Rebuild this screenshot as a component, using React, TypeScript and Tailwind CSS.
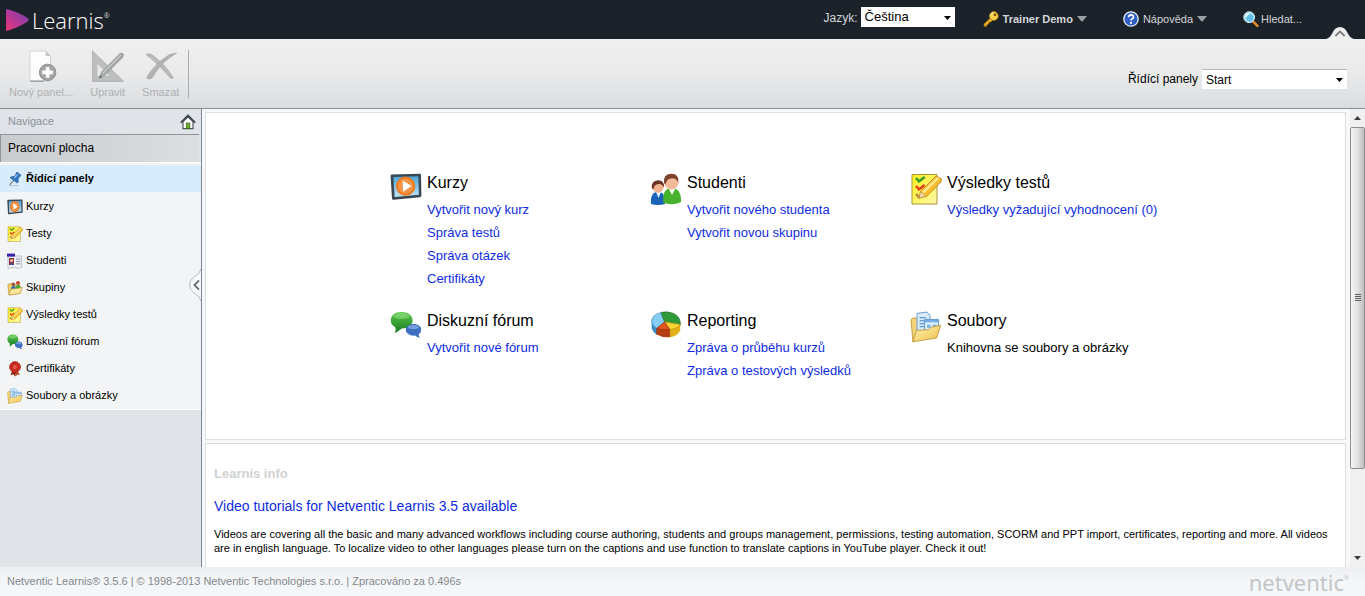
import type { ReactNode } from "react";

type IconProps = { className?: string };

const CourseIcon = ({ className }: IconProps) => (
  <svg className={className} viewBox="0 0 32 28" preserveAspectRatio="none" aria-hidden="true">
    <defs>
      <linearGradient id="courseScreen" x1="0" y1="0" x2="0" y2="1">
        <stop offset="0" stopColor="#4aa3d6" />
        <stop offset="1" stopColor="#bfe6f7" />
      </linearGradient>
    </defs>
    <path d="M1.5 1.5 L30 0.8 Q31 .8 31 2 L31.4 22.6 Q31.4 24 30 24.2 L3.6 26.8 Q2.2 27 2 25.4 L.6 3 Q.6 1.6 1.5 1.5Z" fill="#3b4653" />
    <path d="M3.4 4 L28.4 3.2 L28.9 21.8 L4.6 24Z" fill="url(#courseScreen)" />
    <circle cx="15.6" cy="13.2" r="9.6" fill="#f07a1c" />
    <circle cx="15.6" cy="13.2" r="7.6" fill="#f79447" />
    <path d="M12.6 7.6 L21.6 13 L13 18.8Z" fill="#fff" />
  </svg>
);

const StudentsIcon = ({ className }: IconProps) => (
  <svg className={className} viewBox="0 0 32 32" aria-hidden="true">
    <path d="M1 31 Q0 21 6 19 H10 Q16 21 15 31 Q8 33 1 31Z" fill="#1c62b8" />
    <path d="M6 19 L8.5 25 L11 19Z" fill="#e8f3fb" />
    <circle cx="8" cy="14" r="5.6" fill="#f0b391" />
    <path d="M1.8 15 Q1 7.6 8 7.2 Q15 7.6 13.8 14.6 Q12.6 11.4 9.4 11 Q4 11 3.4 16.4Z" fill="#6d3424" />
    <path d="M13.4 29.6 Q12 18 18.4 15.4 H25 Q31.6 17.6 31 29 Q22 33.4 13.4 29.6Z" fill="#47b32c" />
    <path d="M18.6 15.4 L22 22 L25.6 15.4Z" fill="#f2f9e8" />
    <circle cx="21.4" cy="9.4" r="7" fill="#f4b997" />
    <path d="M14 10 Q13 1.2 21 .8 Q29.6 .6 28.4 10.6 Q27.6 6.2 24 5.4 Q17 4 15.4 11.6Z" fill="#7d402c" />
  </svg>
);

const TestIcon = ({ className }: IconProps) => (
  <svg className={className} viewBox="0 0 32 32" aria-hidden="true">
    <defs>
      <linearGradient id="testPaper" x1="0" y1="0" x2="1" y2="1">
        <stop offset="0" stopColor="#ffee1c" />
        <stop offset="1" stopColor="#fff9a8" />
      </linearGradient>
    </defs>
    <path d="M2 1.5 H27 V31 H2Z" fill="url(#testPaper)" stroke="#a8943c" />
    <path d="M6 5 L9 8.4 L14.6 4" fill="none" stroke="#2f9a26" strokeWidth="2.4" />
    <path d="M6 13 L9 16.4 L14.6 12" fill="none" stroke="#e23a1a" strokeWidth="2.4" />
    <path d="M6 21 L9 24.4 L13 21" fill="none" stroke="#b9863a" strokeWidth="2.4" />
    <path d="M9 25 L10.6 18.4 L26 3 L31.4 5.6 L31 9 L16.4 23.4Z" fill="#f8bf2e" stroke="#b87f1b" strokeWidth=".8" />
    <path d="M12.8 19.6 L28.4 4.8" stroke="#ffe994" strokeWidth="2.2" />
    <path d="M9 25 L10.6 18.6 L15.8 23.2Z" fill="#f3dcb4" stroke="#b87f1b" strokeWidth=".5" />
  </svg>
);

const ForumIcon = ({ className }: IconProps) => (
  <svg className={className} viewBox="0 0 32 28" preserveAspectRatio="none" aria-hidden="true">
    <defs>
      <linearGradient id="bubbleGreen" x1="0" y1="0" x2="0" y2="1">
        <stop offset="0" stopColor="#5cc850" />
        <stop offset="1" stopColor="#157a1c" />
      </linearGradient>
    </defs>
    <path d="M11.4 1 C18 1 22.6 4.4 22.6 9.6 C22.6 14.6 18 17.6 12 17.6 C10 18.6 7 21.6 4.6 22 C6 20 6 17.6 5 15.8 C2 14.4 .8 12.2 .8 9.4 C.8 4.4 5 1 11.4 1Z" fill="url(#bubbleGreen)" />
    <ellipse cx="11.6" cy="5" rx="8" ry="3" fill="#9be48c" opacity=".5" />
    <path d="M23.6 13 C28.4 13 31.2 15.6 31.2 18.8 C31.2 21 30 22.6 28.6 23.4 C28.6 24.8 29.4 26 30.2 26.8 C28 26.8 26.2 25.6 25.2 24.6 C19.4 25 15.8 22.2 15.8 18.8 C15.8 15.6 19 13 23.6 13Z" fill="#3f6fc0" />
    <ellipse cx="23.4" cy="16" rx="5.6" ry="2" fill="#8db0e8" opacity=".7" />
  </svg>
);

const PieIcon = ({ className }: IconProps) => (
  <svg className={className} viewBox="0 0 32 28" aria-hidden="true">
    <path d="M1.6 9 V17 Q3 21.6 7 23.6 V14Z" fill="#3c8fc6" />
    <path d="M6.8 14 V23.6 Q12 26.8 19.6 26.2 V15Z" fill="#b53e12" />
    <path d="M19.6 14 V26.2 Q27.6 25 30.2 19.4 V11Z" fill="#e3b018" />
    <path d="M14.6 10.8 L10.6 1.6 Q2 4 1.6 10 Q2 14.6 6.8 17.4Z" fill="#86cdf3" stroke="#3a86b8" strokeWidth=".6" />
    <path d="M14.6 10.8 L11 1.4 Q17 -.2 23.6 2.4 Q30.8 6 30.4 14Z" fill="#2f9a38" stroke="#1c6c25" strokeWidth=".6" />
    <path d="M14.6 10.8 L30.4 13.6 Q28.6 17.4 19.6 18.4Z" fill="#fbd43a" stroke="#b9870c" strokeWidth=".6" />
    <path d="M14.6 10.8 L6.8 17.4 Q12.6 19.4 19.6 18.4Z" fill="#e3551d" stroke="#8f2d0b" strokeWidth=".6" />
    <path d="M6.8 17.4 V23.6 M19.6 18.4 V26" stroke="#8f2d0b" strokeWidth=".8" />
  </svg>
);

const FilesIcon = ({ className }: IconProps) => (
  <svg className={className} viewBox="0 0 32 32" aria-hidden="true">
    <defs>
      <linearGradient id="folderFront" x1="0" y1="0" x2="1" y2="1">
        <stop offset="0" stopColor="#fff2b2" />
        <stop offset="1" stopColor="#efc04a" />
      </linearGradient>
    </defs>
    <path d="M1 9 L2.6 7 H8 L9 9 V28 L3 31Z" fill="#f2d376" stroke="#bb8f2f" strokeWidth=".8" />
    <path d="M7 2.4 L17 1 L20 4.4 L20.4 20 H7Z" fill="#d8ebfb" stroke="#6f9fd0" />
    <path d="M9.6 6.6 H16 M9.6 9.6 H17 M9.6 12.6 H15 M9.6 15.6 H15" stroke="#5f9cd8" strokeWidth="1.4" />
    <path d="M14.6 8.4 H28.6 V21 H14.6Z" fill="#e4f2fd" stroke="#6796c8" />
    <path d="M15 9 H28.2 V11.4 H15Z" fill="#75aee4" />
    <path d="M17 13.4 H20.6 V17 H17Z M22.6 13.4 H26.6 V17 H22.6Z" fill="#82b4e2" />
    <path d="M2.8 30.8 L6.4 19.4 L19 18.6 L21.6 16 L30.6 14.4 L26.6 27Z" fill="url(#folderFront)" stroke="#bb8f2f" strokeWidth=".8" />
  </svg>
);

const PinIcon = ({ className }: IconProps) => (
  <svg className={className} viewBox="0 0 16 16" aria-hidden="true">
    <path d="M2 14.6 H11" stroke="#b8c3cf" strokeWidth="1.2" />
    <path d="M2.6 13.8 L6.8 9.4" stroke="#7b8896" strokeWidth="1.3" />
    <path d="M3 6.6 Q5 5 7 5.6 L9 3.4 Q8.4 2 10 1.2 L13.8 4 Q13.8 5.6 12.2 5.8 L11 8.4 Q12 10.6 10.2 12Z" fill="#2f78c4" stroke="#1c4f8c" strokeWidth=".6" />
    <path d="M7.4 6.8 L10.6 3.4" stroke="#9cc8f2" strokeWidth="1.2" />
  </svg>
);

const CardIcon = ({ className }: IconProps) => (
  <svg className={className} viewBox="0 0 16 16" aria-hidden="true">
    <path d="M1 3 H14.6 V14.4 L11 15.4 L7 14.4 L1 15.4Z" fill="#eef1f6" stroke="#a9afba" strokeWidth=".7" />
    <path d="M0 .6 H8 V3.6 H0Z" fill="#3a1fb0" />
    <path d="M2 5 H7 V12 H2Z" fill="#8a3345" />
    <circle cx="4.6" cy="7.4" r="1.5" fill="#f3c4a4" />
    <path d="M2.6 12 Q4.6 8 6.6 12Z" fill="#3457b8" />
    <path d="M9 6 H13.4 M9 8.4 H13.4 M9 10.8 H13.4" stroke="#8e97a8" />
  </svg>
);

const GroupFolderIcon = ({ className }: IconProps) => (
  <svg className={className} viewBox="0 0 16 16" aria-hidden="true">
    <path d="M.8 5 L2 3.8 H5 L6 5 H13 V13 L2 15Z" fill="#f0d06a" stroke="#b38a2e" strokeWidth=".6" />
    <circle cx="6.4" cy="4.4" r="1.8" fill="#9c5a3a" />
    <path d="M4 9 Q4 6 6.4 6 T9 9Z" fill="#2d6fc0" />
    <circle cx="11" cy="3" r="2" fill="#c2452e" />
    <path d="M8.4 8.6 Q8.4 5 11 5 T13.8 8.6Z" fill="#3faa35" />
    <path d="M1.8 15 L4 9 L9.4 8.6 L15.4 7.4 L13.4 13.4Z" fill="#fbe89a" stroke="#b38a2e" strokeWidth=".6" />
  </svg>
);

const CertificateIcon = ({ className }: IconProps) => (
  <svg className={className} viewBox="0 0 16 16" aria-hidden="true">
    <path d="M5.4 9 L3.6 14 L6.6 13.4 L8 15.6 L9.4 9Z" fill="#8f2a14" />
    <path d="M10 9 L13 14 L10.4 13.4 L8.6 15.4 L7.4 9Z" fill="#b34a1e" />
    <circle cx="8" cy="6" r="5.4" fill="#cf2a1e" stroke="#94160f" strokeWidth="1" strokeDasharray="1.6 .8" />
    <circle cx="8" cy="6" r="2.8" fill="#ea5445" stroke="#a31c14" strokeWidth=".7" />
  </svg>
);

const HomeIcon = () => (
  <svg className="h-4 w-4" viewBox="0 0 16 16" aria-hidden="true">
    <path d="M3 7.6 L8 2.8 L13 7.6 V14.6 H3Z" fill="#fff" stroke="#4c5560" strokeWidth="1.2" />
    <path d="M.8 8.6 L8 1.6 L15.2 8.6" fill="none" stroke="#3c4652" strokeWidth="1.8" />
    <path d="M6.4 9 H9.8 V14.6 H6.4Z" fill="#6cab2c" stroke="#3f6b17" strokeWidth=".8" />
  </svg>
);

const KeyIcon = () => (
  <svg className="h-4 w-4" viewBox="0 0 16 16" aria-hidden="true">
    <path d="M8.6 6 L1 13 L1.2 15.2 L3.6 15.2 L4 13.4 L5.6 13 L6 11.2 L7.8 11 L10.4 8.4Z" fill="#f0b429" stroke="#a86f0c" strokeWidth=".7" />
    <circle cx="10.8" cy="5" r="4.4" fill="#f8cf4c" stroke="#b27a12" strokeWidth=".7" />
    <circle cx="12" cy="3.8" r="1.3" fill="#6d4a08" />
    <path d="M7.6 4.4 Q8.4 2 10.6 1.8" fill="none" stroke="#fff2b8" />
  </svg>
);

const HelpIcon = () => (
  <svg className="h-4 w-4" viewBox="0 0 16 16" aria-hidden="true">
    <circle cx="8" cy="8" r="7.2" fill="#2f5fc4" stroke="#e9effa" strokeWidth="1.3" />
    <path d="M5.6 6.2 Q5.8 3.8 8.1 3.8 Q10.5 3.9 10.4 6 Q10.3 7.2 9 7.9 Q8 8.5 8 9.6" fill="none" stroke="#fff" strokeWidth="1.7" />
    <circle cx="8" cy="11.9" r="1.1" fill="#fff" />
  </svg>
);

const SearchIcon = () => (
  <svg className="h-4 w-4" viewBox="0 0 16 16" aria-hidden="true">
    <path d="M10 10.4 L14.4 14.8" stroke="#e08a2c" strokeWidth="2.6" strokeLinecap="round" />
    <circle cx="6.2" cy="6.2" r="5.4" fill="#a5e3f7" stroke="#d8edf5" strokeWidth="1" />
    <circle cx="6.8" cy="6.8" r="3.6" fill="#5fc0ea" />
    <path d="M3 6 Q3.2 3.4 5.8 3" fill="none" stroke="#fff" strokeWidth="1.4" />
  </svg>
);

const NewPanelIcon = () => (
  <svg className="h-8 w-8" viewBox="0 0 32 32" aria-hidden="true">
    <path d="M5 1 H20.6 L25.6 6 V31 H5Z" fill="#fdfdfd" stroke="#d2d4d6" />
    <path d="M20.6 1 V6 H25.6Z" fill="#c4c6c8" />
    <path d="M5 31.2 H19" stroke="#9b9d9f" strokeWidth="1.4" />
    <circle cx="22.6" cy="22.4" r="8.2" fill="#a2a4a6" stroke="#8c8e90" />
    <path d="M22.6 17 V27.8 M17.2 22.4 H28" stroke="#fff" strokeWidth="3.6" />
  </svg>
);

const EditIcon = () => (
  <svg className="h-8 w-8" viewBox="0 0 32 32" aria-hidden="true">
    <path fillRule="evenodd" d="M0 .6 L31.6 31.4 H0Z M5.4 14 V25.4 H17Z" fill="#bcbebf" />
    <path d="M0 .6 L31.6 31.4 H0Z" fill="none" stroke="#a6a8aa" strokeWidth=".8" />
    <path d="M7 28.4 L9 22 L28 3 Q31 2 32 5 L31 7.4 L13 25.6Z" fill="#a2a4a5" />
    <path d="M10.6 23.6 L29 5" stroke="#c9cbcc" strokeWidth="1.4" />
    <path d="M7 28.6 L8.2 25 L10.4 27.2Z" fill="#6c6e70" />
  </svg>
);

const DeleteIcon = () => (
  <svg className="h-8 w-8" viewBox="0 0 32 32" aria-hidden="true">
    <path d="M1 4.4 Q4 3 6.6 4.6 Q19 13 28.6 28 L25.6 28.4 Q14 14 1 4.4Z" fill="#b7b9bb" stroke="#a3a5a7" strokeWidth=".6" />
    <path d="M31.6 3 Q30 3 24 4.8 Q9 14.6 2 27 Q1.6 29.4 4.4 29 Q7 28.8 9 25 Q16 12.6 31.6 3Z" fill="#b0b2b4" stroke="#a3a5a7" strokeWidth=".6" />
  </svg>
);

const DownArrow = ({ className }: IconProps) => (
  <svg className={className} viewBox="0 0 10 6" preserveAspectRatio="none" aria-hidden="true">
    <path d="M0 0 H10 L5 6Z" fill="currentColor" />
  </svg>
);

const navItems = [
  { label: "Kurzy", icon: CourseIcon },
  { label: "Testy", icon: TestIcon },
  { label: "Studenti", icon: CardIcon },
  { label: "Skupiny", icon: GroupFolderIcon },
  { label: "Výsledky testů", icon: TestIcon },
  { label: "Diskuzní fórum", icon: ForumIcon },
  { label: "Certifikáty", icon: CertificateIcon },
  { label: "Soubory a obrázky", icon: FilesIcon },
];

const sections = [
  {
    title: "Kurzy",
    icon: CourseIcon,
    iconClass: "h-7",
    links: ["Vytvořit nový kurz", "Správa testů", "Správa otázek", "Certifikáty"],
  },
  {
    title: "Studenti",
    icon: StudentsIcon,
    iconClass: "h-8",
    links: ["Vytvořit nového studenta", "Vytvořit novou skupinu"],
  },
  {
    title: "Výsledky testů",
    icon: TestIcon,
    iconClass: "h-8",
    links: ["Výsledky vyžadující vyhodnocení (0)"],
  },
  {
    title: "Diskuzní fórum",
    icon: ForumIcon,
    iconClass: "h-7",
    links: ["Vytvořit nové fórum"],
  },
  {
    title: "Reporting",
    icon: PieIcon,
    iconClass: "h-7",
    links: ["Zpráva o průběhu kurzů", "Zpráva o testových výsledků"],
  },
  {
    title: "Soubory",
    icon: FilesIcon,
    iconClass: "h-8",
    links: [],
    note: "Knihovna se soubory a obrázky",
  },
];

const ToolButton = ({ label, children }: { label: string; children: ReactNode }) => (
  <button
    type="button"
    disabled
    className="flex flex-col items-center gap-[2px] text-[11px] leading-4 text-[#aeb1b4]"
  >
    {children}
    <span>{label}</span>
  </button>
);

const Header = () => (
  <header className="relative flex h-[39px] shrink-0 items-center bg-[#1c2229] text-[#d3d6d9]">
    <a href="#" className="flex items-center gap-[3px] pl-[6px] text-white">
      <svg className="h-[22px] w-[23px]" viewBox="0 0 23 22" aria-hidden="true">
        <defs>
          <linearGradient id="logoMark" x1="0" y1="1" x2="1" y2="0">
            <stop offset="0" stopColor="#e8356f" />
            <stop offset=".5" stopColor="#b03a9c" />
            <stop offset="1" stopColor="#6f3fa8" />
          </linearGradient>
        </defs>
        <path d="M0 1 Q0 0 1.4 .2 Q14 3.4 21.6 9.2 Q23.6 11 21.6 12.6 Q14 18 1.4 21.8 Q0 22 0 21Z" fill="url(#logoMark)" />
      </svg>
      <span className="flex font-['Open_Sans',sans-serif] text-[22px] font-light leading-6">
        Learnis<span className="text-[7px] leading-4">®</span>
      </span>
    </a>
    <div className="ml-auto flex h-full items-start pt-[7px]">
      <label htmlFor="language" className="pr-[3px] text-[12px] leading-[22px]">
        Jazyk:
      </label>
      <div className="relative h-5 w-[94px]">
        <select
          id="language"
          className="block h-full w-full appearance-none bg-white pl-1 text-[13px] leading-5 text-black"
        >
          <option>Čeština</option>
        </select>
        <DownArrow className="pointer-events-none absolute right-1 top-[9px] h-[4px] w-[7px] text-black" />
      </div>
      <button type="button" className="ml-7 flex h-6 items-center gap-1 text-[11px] font-bold">
        <KeyIcon />
        Trainer Demo
        <DownArrow className="h-[6px] w-[10px] text-[#9da1a5]" />
      </button>
      <button type="button" className="ml-9 flex h-6 items-center gap-1 text-[11px]">
        <HelpIcon />
        Nápověda
        <DownArrow className="h-[6px] w-[10px] text-[#9da1a5]" />
      </button>
      <button type="button" className="ml-9 mr-[63px] flex h-6 items-center gap-[2px] text-[11px]">
        <SearchIcon />
        Hledat...
      </button>
    </div>
    <button type="button" aria-label="Skrýt panel" className="absolute bottom-0 right-[11px]">
      <svg className="h-3 w-7" viewBox="0 0 28 12" aria-hidden="true">
        <path d="M0 12 Q4 11 6.4 6 Q9 0 14 0 T21.6 6 Q24 11 28 12Z" fill="#efefef" />
        <path d="M9.4 9 L14 4.4 L18.6 9" fill="none" stroke="#777b80" strokeWidth="1.8" />
      </svg>
    </button>
  </header>
);

const Toolbar = () => (
  <div className="flex h-[70px] shrink-0 items-start justify-between border-b border-[#858e96] bg-linear-to-b from-[#efefef] via-[#eaeaeb] to-[#d9dde0]">
    <div className="flex items-start gap-[17px] pl-[9px] pt-[11px]">
      <ToolButton label="Nový panel...">
        <NewPanelIcon />
      </ToolButton>
      <ToolButton label="Upravit">
        <EditIcon />
      </ToolButton>
      <ToolButton label="Smazat">
        <DeleteIcon />
      </ToolButton>
      <div className="-ml-2 h-12 w-px bg-[#a9adb1]" />
    </div>
    <div className="flex items-center pr-[18px] pt-[30px]">
      <label htmlFor="dashboard" className="pr-1 text-[12px] leading-5 text-black">
        Řídící panely
      </label>
      <div className="relative h-5 w-[145px]">
        <select
          id="dashboard"
          className="block h-full w-full appearance-none border-t border-[#b4b8bc] bg-white pl-1 text-[12px] leading-[18px] text-black"
        >
          <option>Start</option>
        </select>
        <DownArrow className="pointer-events-none absolute right-1 top-[9px] h-[4px] w-[7px] text-black" />
      </div>
    </div>
  </div>
);

const Sidebar = () => (
  <aside className="relative w-[202px] shrink-0 border-r border-[#7c8690] bg-[#e0e3e8]">
    <div className="flex h-[25px] items-center justify-between pl-2 pr-[5px] text-[11px] text-[#8b9299]">
      Navigace
      <a href="#" aria-label="Domů">
        <HomeIcon />
      </a>
    </div>
    <h2 className="mr-[2px] h-[28px] border-l border-t border-[#8e9499] bg-linear-to-r from-[#c9cccf] to-[#dcdee0] pl-[7px] text-[12px] leading-[27px] text-black">
      Pracovní plocha
    </h2>
    <nav className="border-y border-white bg-[#f2f4f5] text-[11px] text-black">
      <a href="#" className="mb-px mt-[2px] flex h-[27px] items-center gap-[3px] bg-[#d9ecfb] pl-[7px] font-bold">
        <PinIcon className="h-4 w-4" />
        Řídící panely
      </a>
      {navItems.map(({ label, icon: Icon }) => (
        <a key={label} href="#" className="flex h-[27px] items-center gap-[3px] pl-[7px]">
          <Icon className="h-4 w-4" />
          {label}
        </a>
      ))}
    </nav>
    <button type="button" aria-label="Sbalit navigaci" className="absolute right-0 top-[160px]">
      <svg className="h-8 w-3" viewBox="0 0 12 32" aria-hidden="true">
        <path d="M12 0 Q11 5 5 8 Q.6 11 .6 16 T5 24 Q11 27 12 32" fill="#f7f8f9" stroke="#a4abb1" strokeWidth=".8" />
        <path d="M10 11.4 L5.4 16 L10 20.6" fill="none" stroke="#666c72" strokeWidth="1.8" />
      </svg>
    </button>
  </aside>
);

const Dashboard = () => (
  <main className="flex min-w-0 flex-1 flex-col gap-[3px] overflow-hidden bg-[#f6f8f9] pl-[3px] pr-1 pt-[3px]">
    <section className="h-[328px] shrink-0 border border-[#dcdfe1] bg-white pt-[57px]">
      <div className="grid auto-rows-[138px] grid-cols-[260px_260px_260px] justify-center pl-[9px]">
        {sections.map(({ title, icon: Icon, iconClass, links, note }) => (
          <div key={title} className="flex items-start gap-[5px] whitespace-nowrap">
            <Icon className={`mt-[3px] w-8 shrink-0 ${iconClass}`} />
            <div className="text-[13px] leading-[23px]">
              <h3 className="pb-[2px] text-[16px] leading-[26px] text-black">{title}</h3>
              {links.map((link) => (
                <a key={link} href="#" className="block text-[#0f2ce2]">
                  {link}
                </a>
              ))}
              {note && <p className="text-black">{note}</p>}
            </div>
          </div>
        ))}
      </div>
    </section>
    <section className="flex-1 border border-b-0 border-[#dcdfe1] bg-white px-2 pt-5">
      <h3 className="text-[13px] font-bold leading-5 text-[#d0d2d4]">Learnis info</h3>
      <a href="#" className="mt-3 block text-[14px] leading-5 text-[#0f2ce2]">
        Video tutorials for Netventic Learnis 3.5 available
      </a>
      <p className="mt-[11px] text-[11px] leading-[14px] text-black">
        Videos are covering all the basic and many advanced workflows including course authoring,
        students and groups management, permissions, testing automation, SCORM and PPT import,
        certificates, reporting and more. All videos are in english language. To localize video to
        other languages please turn on the captions and use function to translate captions in
        YouTube player. Check it out!
      </p>
    </section>
  </main>
);

const Scrollbar = () => (
  <div className="flex w-[15px] shrink-0 flex-col bg-[#f0f0f0]">
    <button type="button" aria-label="Nahoru" className="flex h-[18px] items-center justify-center">
      <DownArrow className="h-[4px] w-[7px] rotate-180 text-[#3c3c3c]" />
    </button>
    <div className="flex-1">
      <div className="flex h-[81%] flex-col items-center justify-center gap-px rounded-xs border border-[#8d8f91] bg-linear-to-r from-[#f5f5f5] via-[#e2e2e2] to-[#bdbec0]">
        <span className="h-px w-[6px] bg-[#5b5d60]" />
        <span className="h-px w-[6px] bg-[#5b5d60]" />
        <span className="h-px w-[6px] bg-[#5b5d60]" />
        <span className="h-px w-[6px] bg-[#5b5d60]" />
      </div>
    </div>
    <button type="button" aria-label="Dolů" className="flex h-[18px] items-center justify-center">
      <DownArrow className="h-[4px] w-[7px] text-[#3c3c3c]" />
    </button>
  </div>
);

const Footer = () => (
  <footer className="flex h-[29px] shrink-0 items-center justify-between bg-linear-to-b from-[#eeeff0] via-[#f4f6f8] to-[#f4f7fa] pl-[7px] pr-4 text-[11px] text-[#83888d]">
    <p>Netventic Learnis® 3.5.6 | © 1998-2013 Netventic Technologies s.r.o. | Zpracováno za 0.496s</p>
    <a href="#" className="flex font-['Noto_Sans',sans-serif] text-[22px] leading-6 text-[#c3c5c7]">
      netventic<span className="text-[6px] leading-4">®</span>
    </a>
  </footer>
);

export default function App() {
  return (
    <div className="flex h-screen flex-col overflow-hidden bg-white font-['Liberation_Sans',Arial,sans-serif]">
      <Header />
      <Toolbar />
      <div className="flex min-h-0 flex-1">
        <Sidebar />
        <Dashboard />
        <Scrollbar />
      </div>
      <Footer />
    </div>
  );
}
